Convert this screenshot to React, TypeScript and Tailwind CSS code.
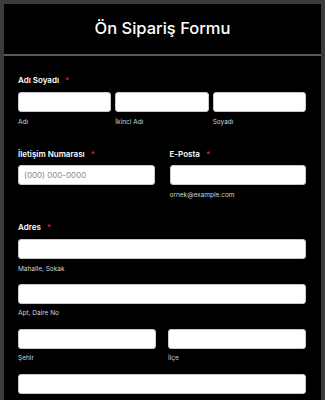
const Label = ({ text }: { text: string }) => (
  <div className="flex h-[10px] items-center gap-[6px] text-[8px] font-semibold leading-none text-white">
    <span>{text}</span>
    <span className="text-[8px] text-[#d2232a]">*</span>
  </div>
);

const Input = ({ placeholder }: { placeholder?: string }) => (
  <input
    type="text"
    placeholder={placeholder}
    className="block h-[20px] w-full rounded-[3px] border border-[#c9c9c9] bg-white px-[5px] text-[8px] text-black outline-none placeholder:text-[#8a8a8a]"
  />
);

const Sub = ({ text, mt = "mt-[5px]" }: { text: string; mt?: string }) => (
  <div className={`${mt} flex h-[10px] items-center text-[6.5px] leading-none text-[#d4d4d4]`}>{text}</div>
);

export default function App() {
  return (
    <div
      className="h-[400px] w-[325px] overflow-hidden bg-[#3b3b3b] px-[4px] pt-[4px] antialiased"
      style={{ fontFamily: "Inter, 'Noto Sans', sans-serif" }}
    >
      <div className="h-full bg-black">
        {/* Header */}
        <div className="flex h-[52px] items-center justify-center border-b-[2px] border-[#5a5a5a] pb-[2px]">
          <h1 className="text-[16.5px] font-medium text-white">Ön Sipariş Formu</h1>
        </div>

        <div className="pl-[14px] pr-[15px] pt-[19px]">
          {/* Name */}
          <Label text="Adı Soyadı" />
          <div className="mt-[7px] grid grid-cols-3 gap-[4px]">
            <div>
              <Input />
              <Sub text="Adı" />
            </div>
            <div>
              <Input />
              <Sub text="İkinci Adı" />
            </div>
            <div>
              <Input />
              <Sub text="Soyadı" />
            </div>
          </div>

          {/* Phone / Email */}
          <div className="mt-[22px] grid grid-cols-2 gap-[15px]">
            <div>
              <Label text="İletişim Numarası" />
              <div className="mt-[6px]">
                <Input placeholder="(000) 000-0000" />
              </div>
            </div>
            <div>
              <Label text="E-Posta" />
              <div className="mt-[6px]">
                <Input />
              </div>
              <Sub text="ornek@example.com" />
            </div>
          </div>

          {/* Address */}
          <div className="mt-[22px]">
            <Label text="Adres" />
            <div className="mt-[7px]">
              <Input />
              <Sub text="Mahalle, Sokak" />
            </div>
            <div className="mt-[10px]">
              <Input />
              <Sub text="Apt, Daire No" mt="mt-[4px]" />
            </div>
            <div className="mt-[11px] grid grid-cols-2 gap-[12px]">
              <div>
                <Input />
                <Sub text="Şehir" mt="mt-[4px]" />
              </div>
              <div>
                <Input />
                <Sub text="İlçe" mt="mt-[4px]" />
              </div>
            </div>
            <div className="mt-[11px]">
              <Input />
            </div>
          </div>
        </div>
      </div>
    </div>
  );
}
